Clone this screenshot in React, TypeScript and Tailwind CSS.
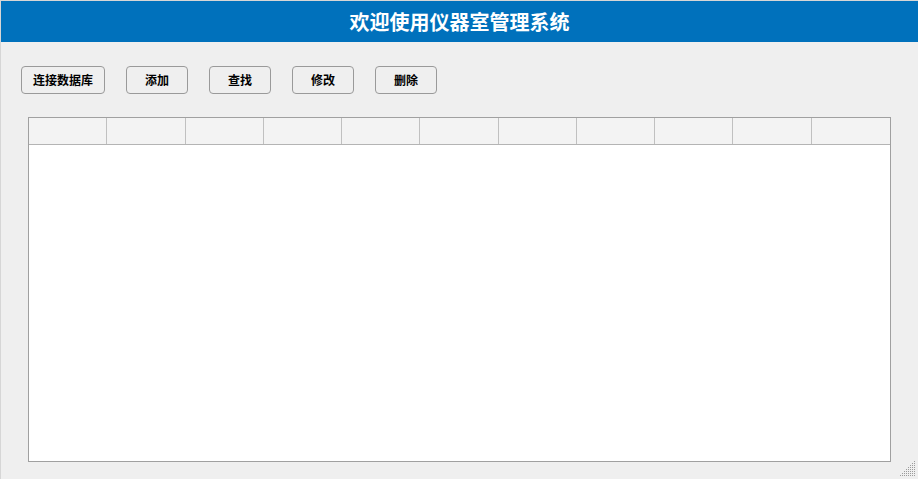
import React from 'react';

const BUTTONS = [
  { label: '连接数据库', w: 'w-[84px]' },
  { label: '添加', w: 'w-[62px]' },
  { label: '查找', w: 'w-[62px]' },
  { label: '修改', w: 'w-[62px]' },
  { label: '删除', w: 'w-[62px]' },
];

const COLS = Array.from({ length: 11 }, (_, i) => i);

function SizeGrip() {
  // dotted triangle in the bottom right corner
  const dots: React.ReactNode[] = [];
  const n = 8;
  for (let r = 0; r < n; r++) {
    for (let c = 0; c < n; c++) {
      if (r + c >= n - 1) {
        dots.push(<rect key={`${r}-${c}`} x={c * 2} y={r * 2} width={1} height={1} fill="#9c9c9c" />);
      }
    }
  }
  return (
    <svg className="absolute right-[2px] bottom-[2px]" width={16} height={16} viewBox="0 0 16 16">
      {dots}
    </svg>
  );
}

export default function App() {
  return (
    <div
      className="relative w-[918px] h-[479px] bg-[#efefef] border-l border-t border-[#d6d6d6] flex flex-col overflow-hidden"
      style={{ fontFamily: '"Noto Sans CJK SC", "Liberation Sans", sans-serif' }}
    >
      <div className="h-[41px] shrink-0 bg-[#0071bc] flex items-center justify-center">
        <h1 className="text-white text-[20px] font-bold leading-none">欢迎使用仪器室管理系统</h1>
      </div>

      {/* toolbar */}
      <div className="flex gap-[21px] pl-[20px] pt-[24px]">
        {BUTTONS.map((b) => (
          <button
            key={b.label}
            className={`${b.w} h-[28px] rounded-[4px] border border-[#9a9a9a] bg-[#efefef] text-[12px] font-bold text-black leading-none`}
          >
            {b.label}
          </button>
        ))}
      </div>

      {/* table */}
      <div className="ml-[27px] mt-[23px] w-[863px] h-[345px] border border-[#a0a0a0] bg-white flex flex-col">
        <div className="h-[27px] shrink-0 bg-[#f3f3f3] border-b border-[#b4b4b4] grid grid-cols-11">
          {COLS.map((i) => (
            <div key={i} className={i < 10 ? 'border-r border-[#c0c0c0]' : ''} />
          ))}
        </div>
        <div className="flex-1" />
      </div>

      <SizeGrip />
    </div>
  );
}
